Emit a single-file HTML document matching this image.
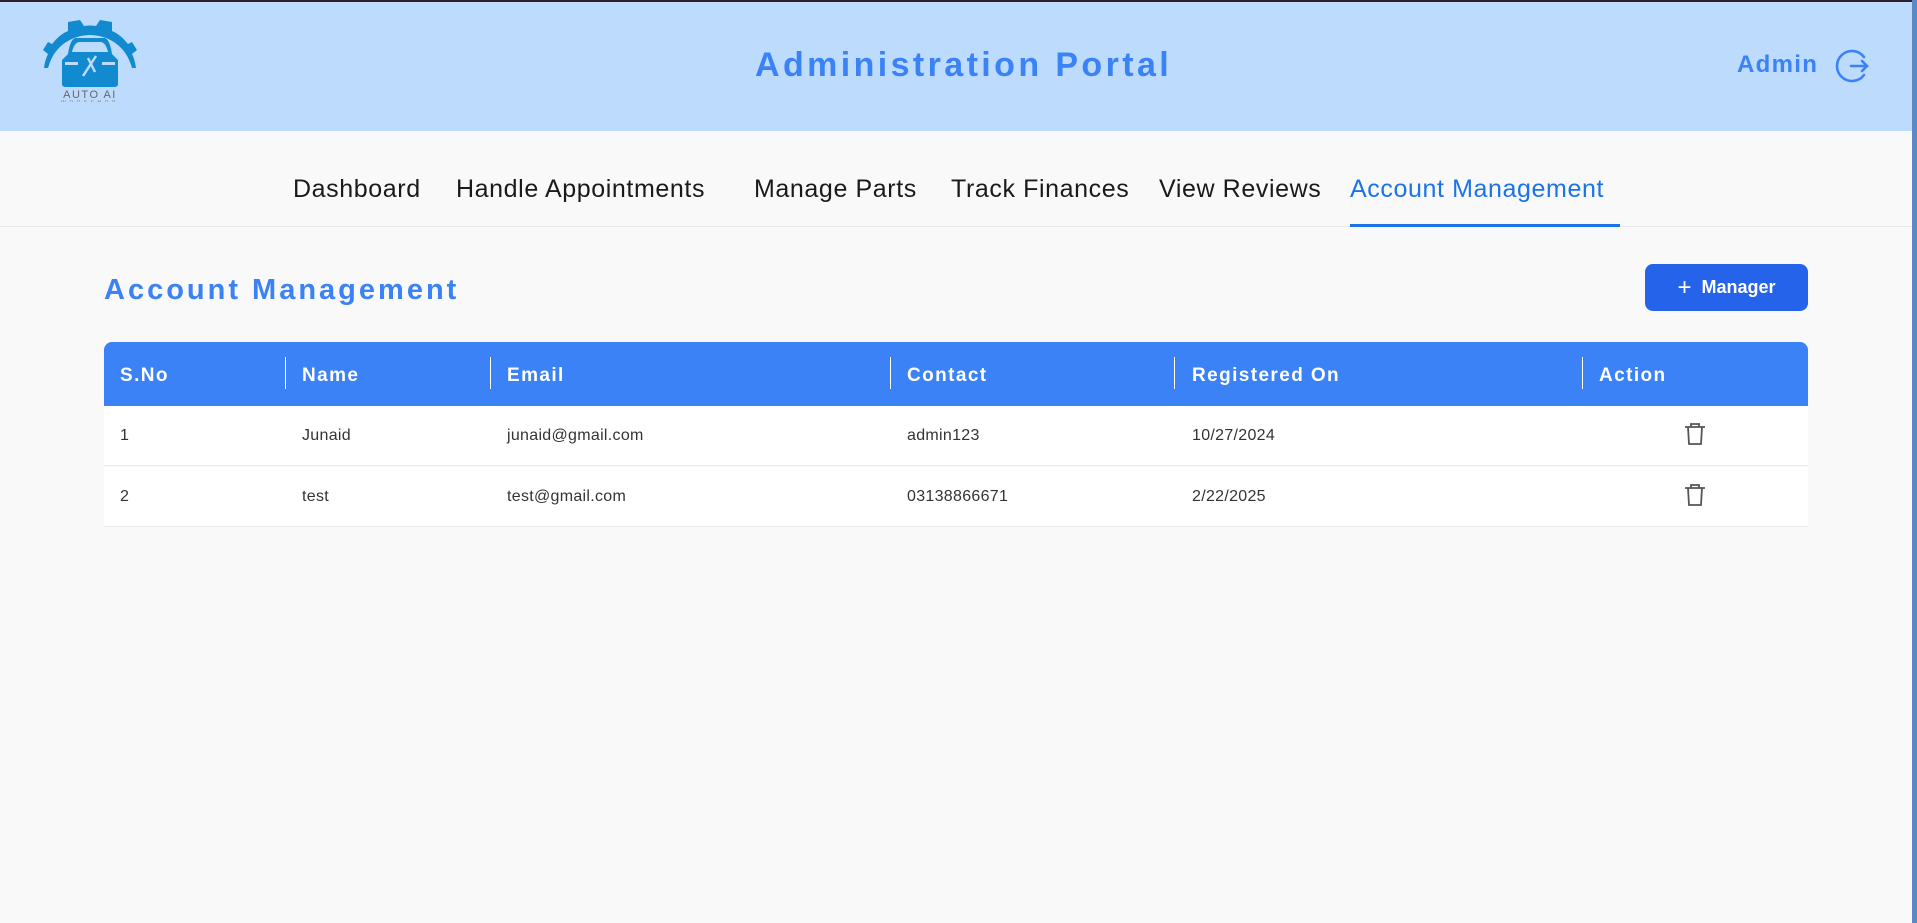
<!DOCTYPE html>
<html><head><meta charset="utf-8"><style>
*{margin:0;padding:0;box-sizing:border-box}
body{width:1917px;height:923px;background:#f9f9f9;font-family:"Liberation Sans",sans-serif;position:relative;overflow:hidden}
.abs{position:absolute;white-space:nowrap}
#topline{left:0;top:0;width:1917px;height:2px;background:#2a1f2a}
#header{left:0;top:2px;width:1912px;height:129px;background:#bddbfd}
#sb{left:1912px;top:0;width:5px;height:923px;background:#5b89c6}
.title{left:755px;top:46px;font-size:34px;font-weight:bold;color:#3b82f6;letter-spacing:3.4px}
.admin{left:1737px;top:51px;font-size:24px;font-weight:bold;color:#3b82f6;letter-spacing:1.3px}
.nav{top:175px;font-size:25px;color:#1a1a1a;letter-spacing:0.6px}
#navline{left:0;top:226px;width:1912px;height:1px;background:#e8e8e8}
#ul{left:1350px;top:224px;width:270px;height:3px;background:#1a73e8}
.h2{left:104px;top:274px;font-size:29px;font-weight:bold;color:#3b82f6;letter-spacing:3px}
#btn{left:1645px;top:264px;width:163px;height:47px;background:#2563eb;border-radius:8px;color:#fff;font-size:18px;font-weight:bold;display:flex;align-items:center;justify-content:center;gap:10px}
#thead{left:104px;top:342px;width:1704px;height:64px;background:#3b82f6;border-radius:8px 8px 0 0}
.th{top:365px;font-size:19px;font-weight:bold;color:#fff;letter-spacing:1.4px}
.sep{top:357px;width:1px;height:32px;background:#fff}
.row{left:104px;width:1704px;height:60px;background:#fff;border-bottom:1px solid #ebebeb}
.td{font-size:16px;color:#333;letter-spacing:0.3px}
</style></head><body>
<div class="abs" id="topline"></div>
<div class="abs" id="header"></div>
<div class="abs" id="sb"></div>
<svg class="abs" style="left:40px;top:14px" width="100" height="88" viewBox="0 0 100 88">
 <path d="M3 36 L8 28 L12 30 Q20 20 28 17 L28 8 L40 6 L44 12 Q50 11 56 12 L60 6 L72 8 L72 17 Q80 20 88 30 L92 28 L97 36 L92 40 Q95 46 96 54 L92 54 Q86 32 66 24 Q50 18 34 24 Q14 32 8 54 L4 54 Q5 46 8 40 Z" fill="#118ad0"/>
 <path d="M28 40 Q30 26 35 24 L65 24 Q70 26 72 40 L78 46 L78 70 Q78 73 74 73 L26 73 Q22 73 22 70 L22 46 Z" fill="#118ad0"/>
 <path d="M32 38 Q34 29 39 28 L61 28 Q66 29 68 38 Z" fill="#bddbfd"/>
 <rect x="25" y="48" width="13" height="3" fill="#bddbfd"/><rect x="62" y="48" width="13" height="3" fill="#bddbfd"/>
 <path d="M43 62 L56 42 M48 44 L55 58" stroke="#bddbfd" stroke-width="2.5"/>
 <text x="50" y="84" font-family="Liberation Sans" font-size="11" fill="#666" text-anchor="middle" letter-spacing="1.5">AUTO AI</text>
 <text x="50" y="90" font-family="Liberation Sans" font-size="5" fill="#888" text-anchor="middle" letter-spacing="3.5">WORKSHOP</text>
</svg>
<div class="abs title">Administration Portal</div>
<div class="abs admin">Admin</div>
<svg class="abs" style="left:1834px;top:47px" width="38" height="38" viewBox="0 0 38 38" fill="none" stroke="#3b82f6" stroke-width="2.6" stroke-linecap="round">
 <path d="M30 10 A15 15 0 1 0 30 28"/><path d="M17 19 H33 M28 14 L33 19 L28 24"/>
</svg>
<div class="abs nav" style="left:293px">Dashboard</div>
<div class="abs nav" style="left:456px">Handle Appointments</div>
<div class="abs nav" style="left:754px">Manage Parts</div>
<div class="abs nav" style="left:951px">Track Finances</div>
<div class="abs nav" style="left:1159px">View Reviews</div>
<div class="abs nav" style="left:1350px;color:#1a73e8">Account Management</div>
<div class="abs" id="navline"></div>
<div class="abs" id="ul"></div>
<div class="abs h2">Account Management</div>
<div class="abs" id="btn"><span style="font-weight:normal;font-size:24px;line-height:1">+</span><span>Manager</span></div>
<div class="abs" id="thead"></div>
<div class="abs th" style="left:120px">S.No</div>
<div class="abs th" style="left:302px">Name</div>
<div class="abs th" style="left:507px">Email</div>
<div class="abs th" style="left:907px">Contact</div>
<div class="abs th" style="left:1192px">Registered On</div>
<div class="abs th" style="left:1599px">Action</div>
<div class="abs sep" style="left:285px"></div>
<div class="abs sep" style="left:490px"></div>
<div class="abs sep" style="left:890px"></div>
<div class="abs sep" style="left:1174px"></div>
<div class="abs sep" style="left:1582px"></div>
<div class="abs row" style="top:406px"></div>
<div class="abs row" style="top:467px"></div>
<div class="abs td" style="left:120px;top:427px">1</div>
<div class="abs td" style="left:302px;top:427px">Junaid</div>
<div class="abs td" style="left:507px;top:427px">junaid@gmail.com</div>
<div class="abs td" style="left:907px;top:427px">admin123</div>
<div class="abs td" style="left:1192px;top:427px">10/27/2024</div>
<div class="abs td" style="left:120px;top:488px">2</div>
<div class="abs td" style="left:302px;top:488px">test</div>
<div class="abs td" style="left:507px;top:488px">test@gmail.com</div>
<div class="abs td" style="left:907px;top:488px">03138866671</div>
<div class="abs td" style="left:1192px;top:488px">2/22/2025</div>
<svg class="abs" style="left:1684px;top:422px" width="22" height="24" viewBox="0 0 22 24" fill="none" stroke="#555" stroke-width="1.8">
 <path d="M1 5 H21 M7 5 V2 H15 V5 M4 5 L5 22 H17 L18 5"/>
</svg>
<svg class="abs" style="left:1684px;top:483px" width="22" height="24" viewBox="0 0 22 24" fill="none" stroke="#555" stroke-width="1.8">
 <path d="M1 5 H21 M7 5 V2 H15 V5 M4 5 L5 22 H17 L18 5"/>
</svg>
</body></html>
